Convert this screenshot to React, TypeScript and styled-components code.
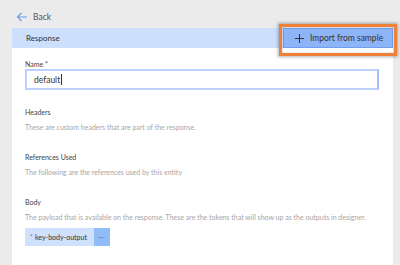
import styled, { createGlobalStyle } from 'styled-components';

const GlobalStyle = createGlobalStyle`
  html, body {
    margin: 0;
    padding: 0;
    background: #ebebeb;
    font-family: Lato, "Open Sans", sans-serif;
  }
`;

const Page = styled.div`
  width: 400px;
  height: 265px;
  overflow: hidden;
  display: flex;
  flex-direction: column;
`;

const BackRow = styled.div`
  display: flex;
  align-items: center;
  gap: 5px;
  height: 28px;
  padding-left: 16px;
  padding-top: 6px;
  box-sizing: border-box;
  font-size: 8.5px;
  color: #555;
`;

const Panel = styled.div`
  margin-left: 12px;
  width: 381px;
  flex: 1;
  background: #fff;
  display: flex;
  flex-direction: column;
`;

const PanelHeader = styled.div`
  position: relative;
  height: 20px;
  background: #cce0fd;
  display: flex;
  align-items: center;
  padding-left: 14px;
  font-size: 8px;
  color: #333;
`;

const ImportButton = styled.button`
  position: absolute;
  right: 0;
  top: 0;
  height: 20px;
  width: 110px;
  box-sizing: border-box;
  background: #8cb4f7;
  border: 1px solid #6f9df0;
  display: flex;
  align-items: center;
  justify-content: center;
  gap: 6px;
  font-family: inherit;
  font-size: 8.5px;
  color: #333;
  padding: 0 0 0 2px;
`;

const Highlight = styled.span`
  position: absolute;
  left: -5px;
  right: -5px;
  top: -5px;
  bottom: -9px;
  border: 3px solid #ef8038;
  box-shadow: 0 0 3px 1px rgba(0, 0, 0, 0.3), inset 0 0 2px rgba(0, 0, 0, 0.25);
  pointer-events: none;
`;

const Body = styled.div`
  padding: 11px 14px 0 13px;
  display: flex;
  flex-direction: column;
`;

const Label = styled.div`
  font-size: 7px;
  color: #444;
  line-height: 10px;
`;

const Hint = styled.div`
  font-size: 7px;
  color: #a6a6a6;
  line-height: 10px;
  margin-top: 5px;
  white-space: nowrap;
`;

const Section = styled.div<{ $gap: number }>`
  margin-top: ${(p) => p.$gap}px;
`;

const Input = styled.div`
  height: 21px;
  box-sizing: border-box;
  border: 2px solid #bdd0fc;
  border-right-color: #a5bdfa;
  display: flex;
  align-items: center;
  padding-left: 7px;
  font-size: 8.5px;
  color: #333;
`;

const Caret = styled.span`
  display: inline-block;
  width: 1px;
  height: 11px;
  background: #333;
  margin-left: 1px;
`;

const Token = styled.div`
  margin-top: 6px;
  display: inline-flex;
  height: 18px;
  align-self: flex-start;
  background: #cfe1fc;
  font-size: 7px;
  color: #333;
`;

const TokenName = styled.span`
  display: flex;
  align-items: center;
  padding: 0 7px 0 5px;
  gap: 2px;
`;

const Star = styled.span`
  color: #d9534f;
`;

const TokenMore = styled.span`
  width: 16px;
  background: #92bcf8;
  display: flex;
  align-items: center;
  justify-content: center;
  color: #5b6e8c;
  font-size: 7px;
  letter-spacing: 0.5px;
`;

export default function App() {
  return (
    <>
      <GlobalStyle />
      <Page>
        <BackRow>
          <svg width="12" height="10" viewBox="0 0 12 10">
            <path d="M11 5H1.5M5.5 1L1.5 5l4 4" fill="none" stroke="#6f9ce8" strokeWidth="1.2" />
          </svg>
          Back
        </BackRow>
        <Panel>
          <PanelHeader>
            Response
            <ImportButton>
              <svg width="9" height="9" viewBox="0 0 9 9">
                <path d="M4.5 0v9M0 4.5h9" stroke="#333" strokeWidth="1" />
              </svg>
              Import from sample
              <Highlight />
            </ImportButton>
          </PanelHeader>
          <Body>
            <Label>Name *</Label>
            <Input>
              default
              <Caret />
            </Input>
            <Section $gap={17}>
              <Label>Headers</Label>
              <Hint>These are custom headers that are part of the response.</Hint>
            </Section>
            <Section $gap={20}>
              <Label>References Used</Label>
              <Hint>The following are the references used by this entity</Hint>
            </Section>
            <Section $gap={20}>
              <Label>Body</Label>
              <Hint>
                The payload that is available on the response. These are the tokens that will show up as the
                outputs in designer.
              </Hint>
            </Section>
            <Token>
              <TokenName>
                <Star>*</Star>key-body-output
              </TokenName>
              <TokenMore>···</TokenMore>
            </Token>
          </Body>
        </Panel>
      </Page>
    </>
  );
}
